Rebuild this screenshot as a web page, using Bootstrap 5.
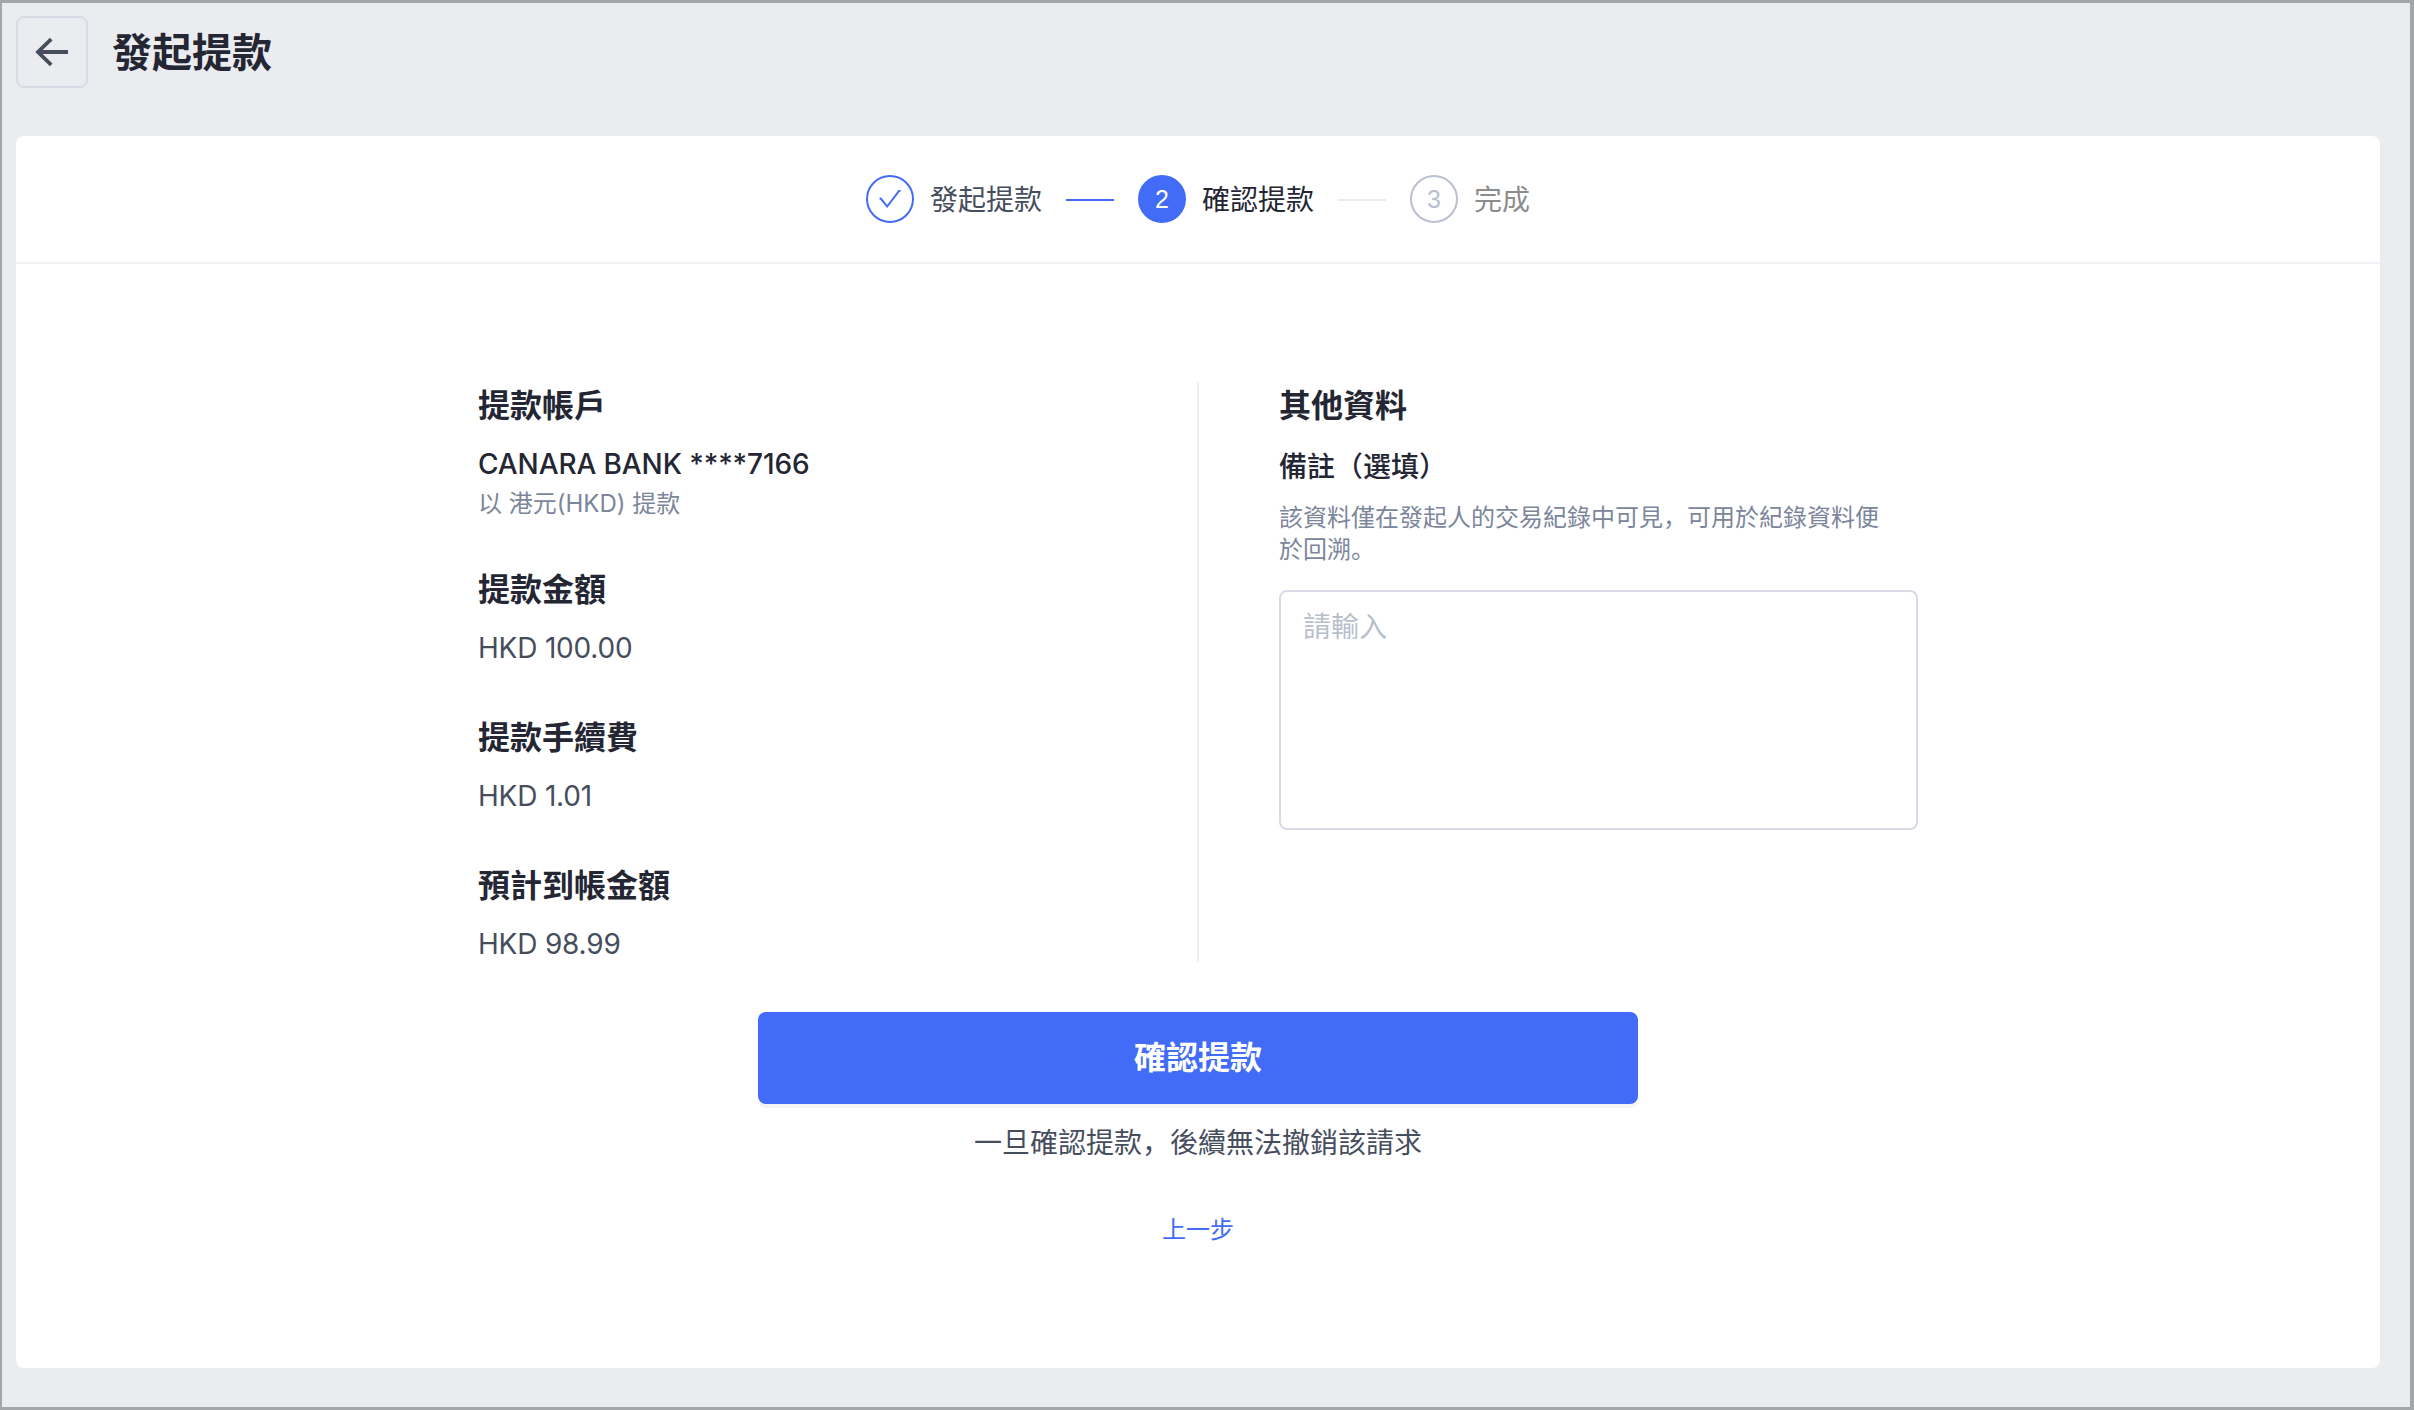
<!DOCTYPE html>
<html lang="zh-CN">
<head>
<meta charset="utf-8">
<meta name="viewport" content="width=device-width, initial-scale=1">
<title>發起提款</title>
<link href="https://cdn.jsdelivr.net/npm/bootstrap@5.3.0/dist/css/bootstrap.min.css" rel="stylesheet">
<style>
  body { font-family: Inter, "Noto Sans CJK SC", sans-serif; color: #464d5d; background: #a4a5a9; font-size: 28px; line-height: 40px; }
  .page-frame { height: 1410px; background: #ebecf0; border: solid #a4a5a9; border-width: 3px 4px 3px 2px; padding: 13px 30px 0 14px; }
  .page-head { height: 72px; gap: 24px; margin-bottom: 48px; }
  .back-btn { width: 72px; height: 72px; border: 2px solid #dadbe7; border-radius: 8px; background: transparent; }
  .page-title { font-size: 40px; line-height: 56px; font-weight: 700; color: #242634; padding-top: 1px; }
  .panel { height: 1232px; border-radius: 8px; }
  .step-bar { height: 128px; border-bottom: 2px solid #f1f1f5; gap: 24px; }
  .step-item { gap: 16px; }
  .step-text { padding-top: 1px; }
  .step-dot { width: 48px; height: 48px; border: 2px solid #426cf7; border-radius: 50%; font: 25px/44px "Liberation Sans", sans-serif; }
  .step-dot.current { background: #426cf7; color: #fff; }
  .step-dot.pending { border-color: #b8bfd0; color: #b8bfd0; }
  .step-line { width: 48px; height: 2px; background: #426cf7; margin-top: 2px; }
  .step-line.pending { background: #ececee; }
  .ink { color: #242634; }
  .hush { color: #8c8c8c; }
  .detail { width: 1440px; height: 580px; margin: 118px auto 0; }
  .detail-left { width: 721px; border-right: 2px solid #f0f0f2; }
  .detail-right { width: 639px; }
  .block-title { font-size: 32px; line-height: 46px; font-weight: 700; color: #242634; margin: 0; padding: 1px 0 15px; }
  .field { margin-bottom: 46px; }
  .field-first { margin-bottom: 42px; }
  .account { font-weight: 500; color: #242634; letter-spacing: -.1px; }
  .note { font-size: 24px; color: #7c869b; }
  .amount { letter-spacing: -.2px; }
  .remark-label { font-weight: 500; line-height: 40px; margin-bottom: 15px; padding-top: 3px; }
  .remark-tip { line-height: 32px; width: 604px; margin-bottom: 24px; }
  .remark-box.form-control { height: 240px; resize: none; border: 2px solid #d8dae7; border-radius: 8px; padding: 15px 22px; font-size: 28px; line-height: 40px; }
  .remark-box::placeholder { color: #b8bfcc; opacity: 1; }
  .submit-btn.btn { width: 880px; height: 92px; margin-top: 50px; border: 0; border-radius: 8px; background: #426cf7; color: #fff; font-size: 32px; font-weight: 700; box-shadow: 0 4px 0 #f4f4f4; }
  .warn { margin-top: 19px; }
  .prev { font-size: 24px; color: #426cf7; margin-top: 47px; }
</style>
<script src="https://cdn.jsdelivr.net/npm/bootstrap@5.3.0/dist/js/bootstrap.bundle.min.js"></script>
</head>
<body>
<div class="page-frame">
  <header class="page-head d-flex align-items-center">
    <button class="back-btn d-flex align-items-center justify-content-center p-0" type="button" aria-label="返回">
      <svg width="34" height="30" viewBox="0 0 34 30" fill="none" stroke="#464d5d" stroke-width="3.8"><path d="M33 15H3M16.200 2.200 3 15l13.200 12.800"/></svg>
    </button>
    <h1 class="page-title mb-0">發起提款</h1>
  </header>

  <main class="panel bg-white overflow-hidden">
    <div class="step-bar d-flex align-items-center justify-content-center">
      <div class="step-item d-flex align-items-center">
        <span class="step-dot d-flex align-items-center justify-content-center">
          <svg width="24" height="20" viewBox="0 0 24 20" fill="none" stroke="#426cf7" stroke-width="2"><path d="M1.500 9.500h1.200l6.500 8L21 2h1.500"/></svg>
        </span>
        <span class="step-text">發起提款</span>
      </div>
      <span class="step-line"></span>
      <div class="step-item d-flex align-items-center ink">
        <span class="step-dot current text-center">2</span>
        <span class="step-text">確認提款</span>
      </div>
      <span class="step-line pending"></span>
      <div class="step-item d-flex align-items-center hush">
        <span class="step-dot pending text-center">3</span>
        <span class="step-text">完成</span>
      </div>
    </div>

    <div class="detail d-flex justify-content-between">
      <section class="detail-left">
        <div class="field-first">
          <h2 class="block-title">提款帳戶</h2>
          <div class="account">CANARA BANK ****7166</div>
          <div class="note">以 港元(HKD) 提款</div>
        </div>
        <div class="field">
          <h2 class="block-title">提款金額</h2>
          <div class="amount">HKD 100.00</div>
        </div>
        <div class="field">
          <h2 class="block-title">提款手續費</h2>
          <div class="amount">HKD 1.01</div>
        </div>
        <div>
          <h2 class="block-title">預計到帳金額</h2>
          <div class="amount">HKD 98.99</div>
        </div>
      </section>
      <section class="detail-right">
        <h2 class="block-title">其他資料</h2>
        <label class="remark-label ink d-block" for="remark">備註（選填）</label>
        <p class="note remark-tip">該資料僅在發起人的交易紀錄中可見，可用於紀錄資料便於回溯。</p>
        <textarea class="remark-box form-control" id="remark" placeholder="請輸入"></textarea>
      </section>
    </div>

    <div class="d-flex flex-column align-items-center">
      <button class="submit-btn btn" type="button">確認提款</button>
      <div class="warn">一旦確認提款，後續無法撤銷該請求</div>
      <a class="prev text-decoration-none" href="#">上一步</a>
    </div>
  </main>
</div>
</body>
</html>
